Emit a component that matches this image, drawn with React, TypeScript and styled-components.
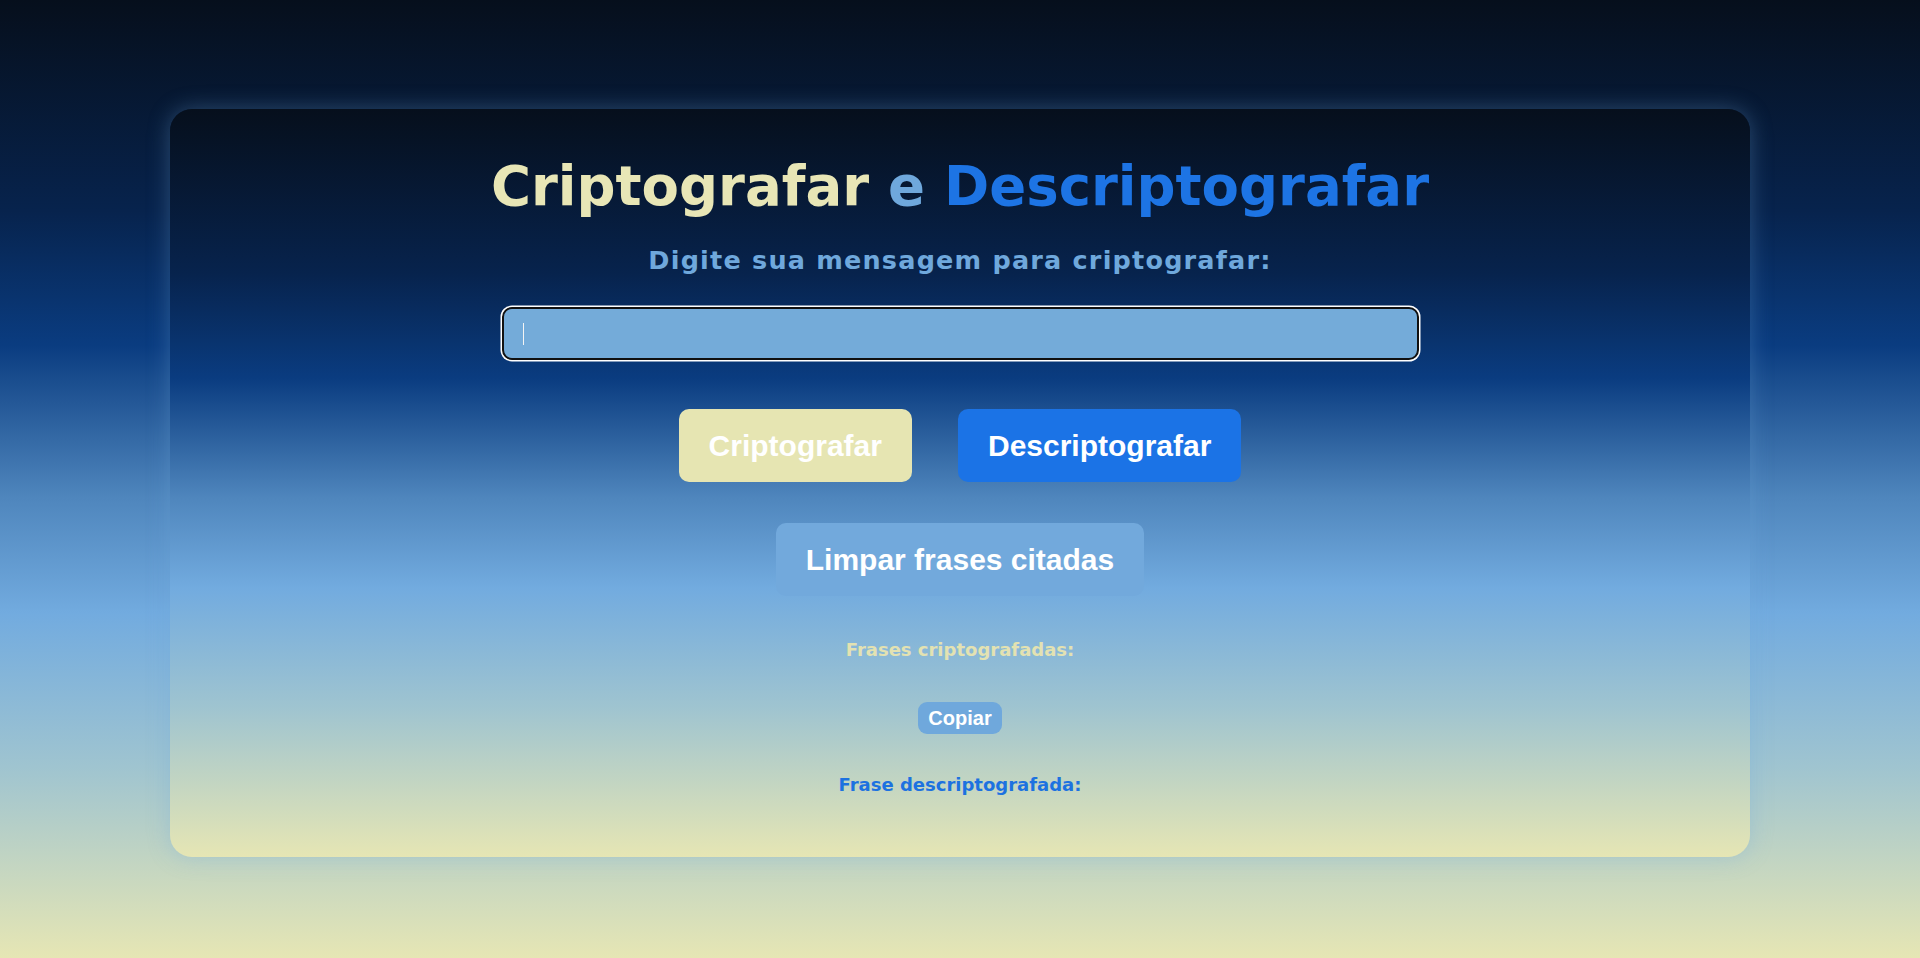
import React from "react";
import styled, { createGlobalStyle } from "styled-components";

const pageGradient =
  "linear-gradient(to bottom, #060f1c 0%, #07234d 22%, #0a3c80 36%, #4f86bd 52%, #72abdf 64%, #9fc4d0 80%, #e6e6b4 100%)";

const headingFont = `"DejaVu Sans", "Inter", sans-serif`;
const buttonFont = `"Liberation Sans", Arial, sans-serif`;

const GlobalStyle = createGlobalStyle`
  html, body {
    margin: 0;
    padding: 0;
  }
  body {
    min-height: 958px;
    background: ${pageGradient};
    font-family: ${headingFont};
  }
  #root {
    display: flex;
    flex-direction: column;
  }
`;

const Card = styled.main`
  margin: 109px 170px 0;
  height: 748px;
  box-sizing: border-box;
  padding-top: 43px;
  border-radius: 22px;
  background: ${pageGradient};
  box-shadow: 0 0 22px rgba(111, 168, 220, 0.35);
  display: flex;
  flex-direction: column;
  align-items: center;
`;

const Title = styled.h1`
  margin: 0;
  font-family: ${headingFont};
  font-weight: 700;
  font-size: 54.5px;
  line-height: 68px;
  color: #e8e6b6;
`;

const Word = styled.span<{ $color: string }>`
  color: ${(p) => p.$color};
`;

const Subtitle = styled.h2`
  margin: 26px 0 0;
  font-family: ${headingFont};
  font-weight: 700;
  font-size: 25.5px;
  letter-spacing: 1.2px;
  line-height: 29px;
  color: #6fa8dc;
`;

const InputWrap = styled.div`
  position: relative;
  margin-top: 32px;
  width: 917px;
  height: 53px;
`;

const TextInput = styled.input`
  box-sizing: border-box;
  width: 100%;
  height: 100%;
  border: 2px solid #111;
  border-radius: 10px;
  box-shadow: 0 0 0 1.5px #fff;
  background: #74abd9;
  outline: none;
  padding: 0 20px;
  font-family: ${headingFont};
  font-size: 18px;
  color: #fff;
`;

const Caret = styled.span`
  position: absolute;
  left: 21px;
  top: 16px;
  width: 1px;
  height: 22px;
  background: #f4f4f4;
`;

const ButtonRow = styled.div`
  display: flex;
  gap: 46px;
  margin-top: 49px;
`;

const ActionButton = styled.button<{ $bg: string }>`
  border: none;
  border-radius: 10px;
  padding: 20px 30px;
  background: ${(p) => p.$bg};
  color: #fff;
  font-family: ${buttonFont};
  font-weight: 700;
  font-size: 30px;
  line-height: 33px;
  cursor: pointer;
`;

const ClearButton = styled(ActionButton)`
  margin-top: 41px;
`;

const Label = styled.h3<{ $color: string; $top: number }>`
  margin: ${(p) => p.$top}px 0 0;
  font-family: ${headingFont};
  font-weight: 700;
  font-size: 18px;
  line-height: 22px;
  color: ${(p) => p.$color};
`;

const CopyButton = styled.button`
  margin-top: 41px;
  border: none;
  border-radius: 9px;
  padding: 5px 10px;
  background: #6fa8dc;
  color: #fff;
  font-family: ${buttonFont};
  font-weight: 700;
  font-size: 20px;
  line-height: 22px;
  cursor: pointer;
`;

export default function App() {
  return (
    <>
      <GlobalStyle />
      <Card>
        <Title>
          Criptografar <Word $color="#6fa8dc">e</Word>{" "}
          <Word $color="#1d74e4">Descriptografar</Word>
        </Title>
        <Subtitle>Digite sua mensagem para criptografar:</Subtitle>
        <InputWrap>
          <TextInput type="text" aria-label="mensagem" />
          <Caret />
        </InputWrap>
        <ButtonRow>
          <ActionButton $bg="#e6e5b2">Criptografar</ActionButton>
          <ActionButton $bg="#1b73e6">Descriptografar</ActionButton>
        </ButtonRow>
        <ClearButton $bg="#72a9dc">Limpar frases citadas</ClearButton>
        <Label $color="#e3e2b2" $top={43}>
          Frases criptografadas:
        </Label>
        <CopyButton>Copiar</CopyButton>
        <Label $color="#1d72e0" $top={40}>
          Frase descriptografada:
        </Label>
      </Card>
    </>
  );
}
